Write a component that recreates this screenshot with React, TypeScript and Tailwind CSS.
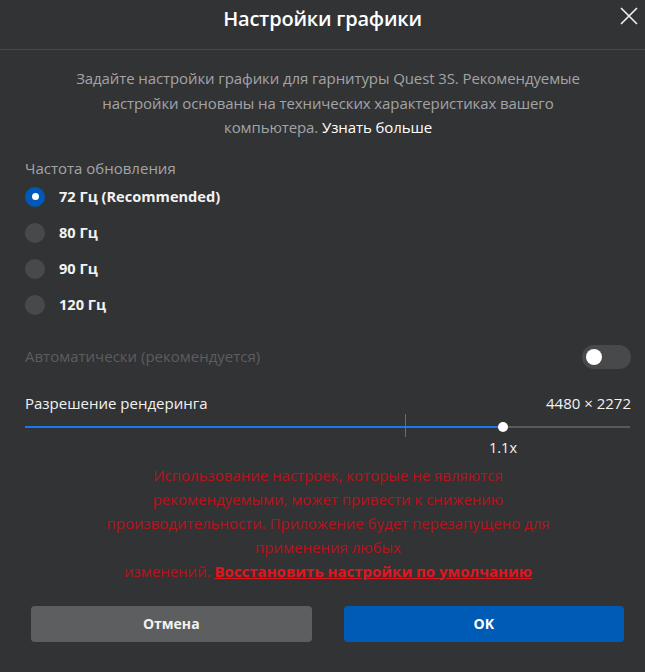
import { useState } from 'react';

const RATES = ['72 Гц (Recommended)', '80 Гц', '90 Гц', '120 Гц'];

export default function App() {
  const [rate, setRate] = useState(0);
  const [auto, setAuto] = useState(false);

  return (
    <div className="w-[645px] h-[672px] bg-[#323335] text-white font-['Open_Sans',sans-serif] overflow-hidden">
      {/* header */}
      <div className="relative h-[50px] border-b border-[#48494b] flex items-center justify-center">
        <h1 className="text-[20px] font-semibold tracking-[-0.2px] leading-none -mt-[12px]">Настройки графики</h1>
        <button type="button" className="absolute right-[6px] top-[6px] w-[20px] h-[20px] flex items-center justify-center">
          <svg width="18" height="18" viewBox="0 0 18 18" fill="none" stroke="#f2f2f2" strokeWidth="1.6">
            <path d="M1 1 L17 17 M17 1 L1 17" />
          </svg>
        </button>
      </div>

      <div className="pl-[25px] pr-[14px]">
        {/* description */}
        <p className="mt-[16px] text-center text-[15px] leading-[24.5px] text-[#a3a4a6] tracking-[-0.1px]">
          Задайте настройки графики для гарнитуры Quest 3S. Рекомендуемые<br />
          настройки основаны на технических характеристиках вашего<br />
          компьютера. <span className="text-white">Узнать больше</span>
        </p>

        {/* refresh rate */}
        <p className="mt-[18px] text-[15px] leading-[20px] text-[#a3a4a6]">Частота обновления</p>
        <div className="mt-[1px] flex flex-col">
          {RATES.map((label, i) => (
            <button
              key={label}
              type="button"
              onClick={() => setRate(i)}
              className="h-9 flex items-center gap-[14px] text-left"
            >
              {rate === i ? (
                <span className="w-5 h-5 rounded-full bg-[#0058b9] flex items-center justify-center">
                  <span className="w-[7px] h-[7px] rounded-full bg-white" />
                </span>
              ) : (
                <span className="w-5 h-5 rounded-full bg-[#48494b]" />
              )}
              <span className="text-[14.6px] font-bold text-[#f2f2f2]">{label}</span>
            </button>
          ))}
        </div>

        {/* auto */}
        <div className="mt-[22px] h-6 flex items-center justify-between">
          <span className="text-[15px] text-[#5c5d5f]">Автоматически (рекомендуется)</span>
          <button
            type="button"
            onClick={() => setAuto(!auto)}
            className="w-[49px] h-6 rounded-full bg-[#48494b] flex items-center px-[4px]"
          >
            <span className="w-4 h-4 rounded-full bg-white" />
          </button>
        </div>

        {/* resolution */}
        <div className="mt-[25px] h-5 flex items-center justify-between text-[15px] text-[#f2f2f2]">
          <span>Разрешение рендеринга</span>
          <span>4480 × 2272</span>
        </div>
        <div className="relative h-[26px]">
          <div className="absolute left-0 right-[1px] top-[12px] h-[2px] bg-[#59595b]" />
          <div className="absolute left-0 top-[12px] h-[2px] w-[478px] bg-[#1877f2]" />
          <div className="absolute left-[380px] top-0 h-[23px] w-[1px] bg-[#6b6c6e]" />
          <div className="absolute left-[473px] top-[8px] w-[10px] h-[10px] rounded-full bg-white" />
        </div>
        <p className="h-5 leading-5 text-[14.5px] text-[#f2f2f2] pl-[464px] -mt-[2px]">1.1x</p>

        {/* warning */}
        <p className="mt-[5px] text-center text-[15px] leading-[24px] text-[#b5141b]">
          Использование настроек, которые не являются<br />
          рекомендуемыми, может привести к снижению<br />
          производительности. Приложение будет перезапущено для<br />
          применения любых<br />
          изменений. <a className="font-bold underline text-[#e0161f]">Восстановить настройки по умолчанию</a>
        </p>
      </div>

      {/* buttons */}
      <div className="mt-[23px] pl-[31px] pr-[21px] flex gap-[32px]">
        <button type="button" className="flex-1 h-9 rounded-[4px] bg-[#5d5e60] text-[14px] font-bold text-[#f2f2f2]">
          Отмена
        </button>
        <button type="button" className="flex-1 h-9 rounded-[4px] bg-[#005bb7] text-[14px] font-bold text-white">
          OK
        </button>
      </div>
    </div>
  );
}
